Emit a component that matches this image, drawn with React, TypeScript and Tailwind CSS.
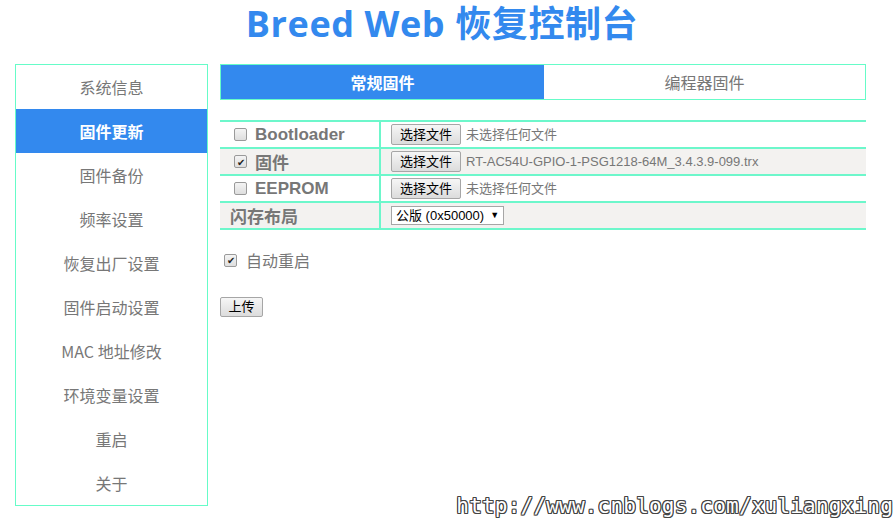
import React from "react";

const menu = [
  "系统信息",
  "固件更新",
  "固件备份",
  "频率设置",
  "恢复出厂设置",
  "固件启动设置",
  "MAC 地址修改",
  "环境变量设置",
  "重启",
  "关于",
];

const font = "font-['Microsoft_YaHei','Noto_Sans_CJK_SC',sans-serif]";
const simFont = "font-['Liberation_Sans','Noto_Sans_CJK_SC',sans-serif]";

function Box({ checked }: { checked?: boolean }) {
  return (
    <span className="inline-flex h-[13px] w-[13px] items-center justify-center rounded-[2px] border border-[#9a9a9a] bg-gradient-to-b from-[#f4f4f4] to-[#dedede] text-[10px] leading-none text-[#222]">
      {checked ? "✔" : ""}
    </span>
  );
}

function FileButton() {
  return (
    <span className={`inline-flex h-[21px] w-[70px] items-center justify-center rounded-[2px] border border-[#a6a6a6] bg-gradient-to-b from-[#f6f6f6] to-[#dcdcdc] text-[13px] text-black ${simFont}`}>
      选择文件
    </span>
  );
}

function Row({
  label,
  checkbox,
  checked,
  file,
  shaded,
  latin,
}: {
  label: string;
  checkbox?: boolean;
  checked?: boolean;
  file: string;
  shaded?: boolean;
  latin?: boolean;
}) {
  return (
    <div className={`flex h-[27px] border-b-2 border-[#6df7cb] ${shaded ? "bg-[#f3f2f0]" : "bg-white"}`}>
      <div className="flex w-[161px] items-center gap-[8px] border-r-2 border-[#6df7cb] pl-[14px]">
        {checkbox && <Box checked={checked} />}
        <span className={`text-[17px] font-bold text-[#777] ${latin ? "font-['Liberation_Sans','Noto_Sans_CJK_SC',sans-serif]" : font}`}>
          {label}
        </span>
      </div>
      <div className="flex items-center gap-[5px] pl-[10px]">
        <FileButton />
        <span className={`text-[13px] text-[#777] ${simFont}`}>{file}</span>
      </div>
    </div>
  );
}

export default function App() {
  return (
    <div className={`relative h-[520px] w-[895px] overflow-hidden bg-white ${font}`}>
      <h1 className="flex h-[46px] items-center justify-center pt-[2px] pr-[11px] text-[36px] font-bold text-[#3389ee]">
        <span className="font-['Open_Sans','Noto_Sans_CJK_SC',sans-serif] tracking-[0.6px]">Breed Web 恢复控制台</span>
      </h1>
      <div className="flex gap-[12px] pl-[15px] pt-[18px]">
        <nav className="flex w-[193px] flex-col border border-[#66fcc8]">
          {menu.map((m, i) => (
            <div
              key={m}
              className={`flex h-[44px] items-center justify-center text-[16px] ${
                i === 1 ? "bg-[#3389ee] font-bold text-white" : "text-[#777]"
              }`}
            >
              {m}
            </div>
          ))}
        </nav>
        <main className="w-[646px]">
          <div className="flex h-[36px] border border-[#66fcc8]">
            <div className="flex w-[323px] items-center justify-center bg-[#3389ee] text-[16px] font-bold text-white">
              常规固件
            </div>
            <div className="flex flex-1 items-center justify-center text-[16px] text-[#777]">编程器固件</div>
          </div>
          <div className="mt-[20px] border-t-2 border-[#6df7cb]">
            <Row label="Bootloader" checkbox latin file="未选择任何文件" />
            <Row label="固件" checkbox checked shaded file="RT-AC54U-GPIO-1-PSG1218-64M_3.4.3.9-099.trx" />
            <Row label="EEPROM" checkbox latin file="未选择任何文件" />
            <div className="flex h-[27px] border-b-2 border-[#6df7cb] bg-[#f3f2f0]">
              <div className="flex w-[161px] items-center border-r-2 border-[#6df7cb] pl-[10px]">
                <span className="text-[17px] font-bold text-[#777]">闪存布局</span>
              </div>
              <div className="flex items-center pl-[10px]">
                <span className={`inline-flex h-[19px] w-[113px] items-center gap-[6px] border border-[#a6a6a6] bg-white pl-[4px] text-[13px] text-black ${simFont}`}>
                  公版 (0x50000)
                  <span className="text-[9px]">▼</span>
                </span>
              </div>
            </div>
          </div>
          <div className="mt-[18px] flex items-center gap-[9px] pl-[4px]">
            <Box checked />
            <span className="text-[16px] text-[#777]">自动重启</span>
          </div>
          <div className="mt-[20px]">
            <span className={`inline-flex h-[20px] w-[43px] items-center justify-center rounded-[2px] border border-[#a6a6a6] bg-gradient-to-b from-[#f6f6f6] to-[#dcdcdc] text-[13px] text-black ${simFont}`}>
              上传
            </span>
          </div>
        </main>
      </div>
      <div className="absolute bottom-[3px] right-[2px] font-['DejaVu_Sans_Mono',monospace] text-[21px] leading-none tracking-[0.2px] text-white [text-shadow:1px_0_#444,-1px_0_#444,0_1px_#444,0_-1px_#444,1px_1px_#444,-1px_-1px_#444,1px_-1px_#444,-1px_1px_#444]">
        http://www.cnblogs.com/xuliangxing
      </div>
    </div>
  );
}
